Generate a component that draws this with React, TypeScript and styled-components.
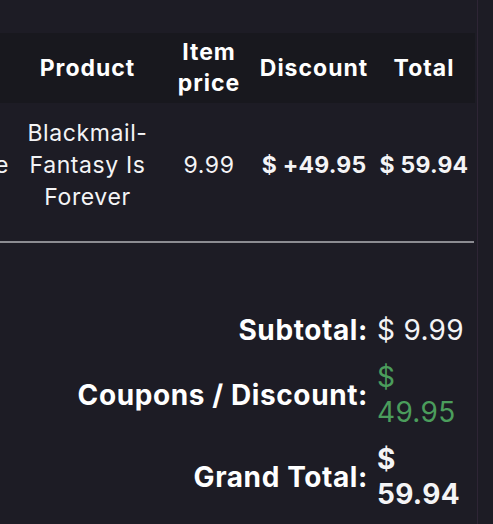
import styled, { createGlobalStyle } from 'styled-components';

const Global = createGlobalStyle`
  html, body {
    margin: 0;
    padding: 0;
    background: #1d1c25;
  }
  body {
    font-family: Inter, "Noto Sans", sans-serif;
    color: #ffffff;
  }
`;

interface Line {
    id: number,
    title: string,
    price: string,
    discount: string,
    total: string,
}

const lines: Line[] = [
    { id: 1, title: 'Blackmail- Fantasy Is Forever', price: '9.99', discount: '$ +49.95', total: '$ 59.94' },
];

export default function App() {
    return (
        <>
            <Global />
            <Page>
                <TableClip>
                    <Table>
                        <colgroup>
                            <col style={{ width: 110 }} />
                            <col style={{ width: 151 }} />
                            <col style={{ width: 92 }} />
                            <col style={{ width: 118 }} />
                            <col style={{ width: 102 }} />
                        </colgroup>
                        <thead>
                            <tr>
                                <Th></Th>
                                <Th>Product</Th>
                                <Th>Item price</Th>
                                <Th>Discount</Th>
                                <Th>Total</Th>
                            </tr>
                        </thead>
                        <tbody>
                            {lines.map(line => <tr key={line.id}>
                                <Td $align='right'>Remove</Td>
                                <Td>{line.title}</Td>
                                <Td>{line.price}</Td>
                                <Td $bold>{line.discount}</Td>
                                <Td $bold>{line.total}</Td>
                            </tr>)}
                        </tbody>
                    </Table>
                </TableClip>
                <Divider />
                <Summary>
                    <Label>Subtotal:</Label>
                    <Value>$ 9.99</Value>
                    <Label>Coupons / Discount:</Label>
                    <Value $color='#4b9d5c'>$ 49.95</Value>
                    <Label>Grand Total:</Label>
                    <Value $bold>$ 59.94</Value>
                </Summary>
            </Page>
        </>
    );
}

const Page = styled.div`
  width: 478px;
  height: 524px;
  box-sizing: border-box;
  border-right: 1px solid #2e2535;
  padding-top: 33px;
  overflow: hidden;
`;

const TableClip = styled.div`
  width: 475px;
  overflow: hidden;
  direction: rtl;
`;

const Table = styled.table`
  direction: ltr;
  border-collapse: collapse;
  table-layout: fixed;
  width: 573px;
`;

const Th = styled.th`
  background: #18181e;
  height: 70px;
  padding: 0 3px;
  font-size: 23px;
  line-height: 31px;
  font-weight: 700;
  letter-spacing: 1px;
  text-align: center;
  vertical-align: middle;
`;

const Td = styled.td<{ $bold?: boolean, $align?: string }>`
  padding: 14px 3px;
  font-size: 23px;
  line-height: 32px;
  font-weight: ${p => p.$bold ? 700 : 400};
  letter-spacing: ${p => p.$bold ? '0.2px' : '0.6px'};
  text-align: ${p => p.$align || 'center'};
  vertical-align: middle;
  color: #f4f4f6;
`;

const Divider = styled.hr`
  margin: 14px 0 0 0;
  width: 474px;
  border: none;
  height: 2px;
  background: #8c8c92;
`;

const Summary = styled.div`
  display: grid;
  grid-template-columns: auto 94px;
  justify-content: end;
  align-items: center;
  column-gap: 9px;
  row-gap: 12px;
  padding: 70px 6px 0 0;
`;

const Label = styled.div`
  font-size: 28px;
  line-height: 35px;
  font-weight: 700;
  letter-spacing: 0.6px;
  text-align: right;
`;

const Value = styled.div<{ $color?: string, $bold?: boolean }>`
  font-size: 28px;
  line-height: 35px;
  font-weight: ${p => p.$bold ? 700 : 400};
  letter-spacing: 0.3px;
  color: ${p => p.$color || '#f4f4f6'};
`;
